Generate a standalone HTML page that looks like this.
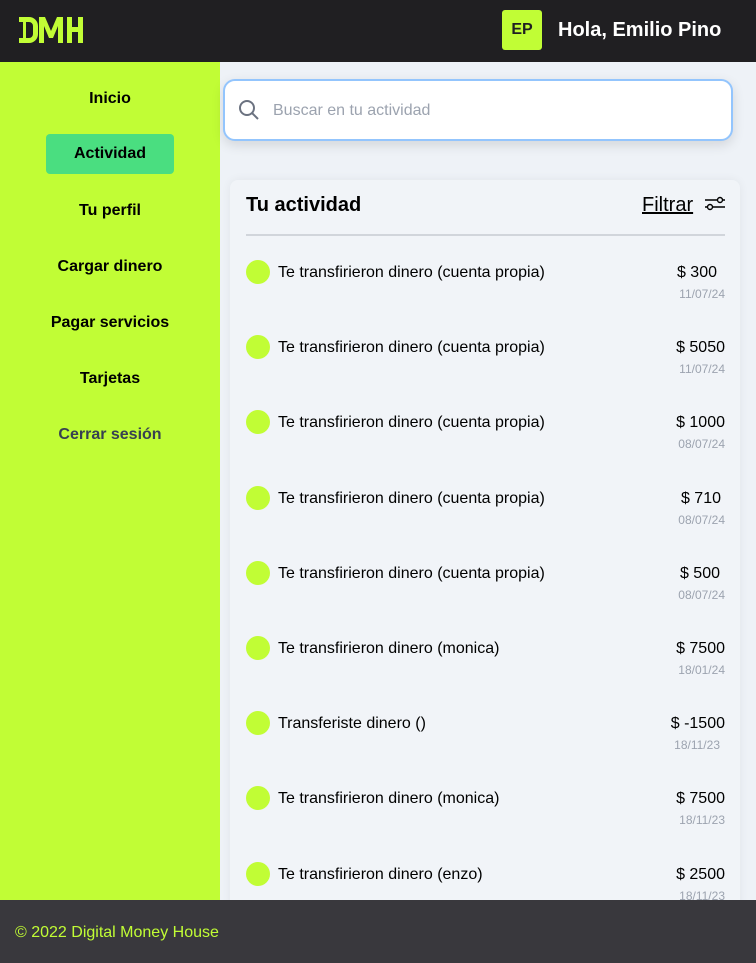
<!DOCTYPE html><html><head><style>
body{margin:0;width:756px;height:963px;overflow:hidden;background:#eef2f7;font-family:"Liberation Sans",sans-serif;position:relative}
.hd{position:absolute;left:0;top:0;width:756px;height:62px;background:#201f22}
.av{position:absolute;left:502px;top:10px;width:40px;height:40px;background:#c1fd35;border-radius:3px;font-weight:bold;font-size:16px;line-height:40px;text-align:center;color:#201f22}
.hola{position:absolute;left:558px;top:19px;color:#fff;font-weight:bold;font-size:20px}
.sb{position:absolute;left:0;top:62px;width:220px;height:838px;background:#c1fd35}
.sb div{position:absolute;left:0;width:220px;text-align:center;font-weight:bold;font-size:16px;color:#000}
.act{left:46px!important;width:128px!important;height:40px;line-height:40px;background:#4ade80;border-radius:4px}
.srch{position:absolute;left:223px;top:79px;width:506px;height:58px;background:#fff;border:2px solid #93c5fd;border-radius:12px;box-shadow:0 4px 12px rgba(0,0,0,.12)}
.srch span{position:absolute;left:48px;top:21px;color:#9ca3af;font-size:16px}
.card{position:absolute;left:230px;top:180px;width:510px;height:740px;background:#f1f4f8;border-radius:8px;box-shadow:0 0 10px rgba(0,0,0,.06)}
.ttl{position:absolute;left:16px;top:14px;font-size:20px;font-weight:bold}
.fil{position:absolute;left:412px;top:14px;font-size:20px;text-decoration:underline}
.ln{position:absolute;left:16px;top:54px;width:479px;height:2px;background:#d1d5db}
.row{position:absolute;left:16px;width:479px;height:50px}
.dot{position:absolute;left:0;top:0;width:24px;height:24px;border-radius:50%;background:#c1fd35}
.tx{position:absolute;left:32px;top:4px;font-size:16px}
.am{position:absolute;right:8px;top:4px;font-size:16px}
.dt{position:absolute;right:0;top:27px;font-size:12px;color:#9ca3af}
.ft{position:absolute;left:0;top:900px;width:756px;height:63px;background:#39383d;color:#c1fd35;font-size:16px}
.ft span{position:absolute;left:15px;top:24px}
</style></head><body>
<div class="hd">
<svg style="position:absolute;left:19px;top:17px" width="64" height="26" viewBox="0 0 64 26" fill="#c1fd35"><path d="M0 0h10a9 9 0 0 1 9 9v8a9 9 0 0 1-9 9H0v-5h4V5H0z M7 5v16h3a4 4 0 0 0 4-4V9a4 4 0 0 0-4-4z"/><path d="M20 26V0h6l6 14 6-14h6v26h-5V9l-5 12h-4L25 9v17z"/><path d="M48 0h5v10h6V0h5v26h-5V15h-6v11h-5z"/></svg>
<div class="av">EP</div><div class="hola">Hola, Emilio Pino</div></div>
<div class="sb">
<div style="top:28px">Inicio</div>
<div class="act" style="top:72px">Actividad</div>
<div style="top:140px">Tu perfil</div>
<div style="top:196px">Cargar dinero</div>
<div style="top:252px">Pagar servicios</div>
<div style="top:308px">Tarjetas</div>
<div style="top:364px;color:#374151">Cerrar sesión</div>
</div>
<div class="srch"><svg style="position:absolute;left:13px;top:18px" width="22" height="22" viewBox="0 0 22 22" fill="none" stroke="#6b7280" stroke-width="2"><circle cx="9" cy="9" r="7"/><path d="M14 14l6 6"/></svg><span>Buscar en tu actividad</span></div>
<div class="card">
<div class="ttl">Tu actividad</div><div class="fil">Filtrar</div>
<svg style="position:absolute;left:474px;top:14px" width="22" height="18" viewBox="0 0 22 18" fill="none" stroke="#000" stroke-width="1.4"><path d="M1 6h13M18 6h3M1 13h3M8 13h13"/><circle cx="16" cy="6" r="2.5"/><circle cx="6" cy="13" r="2.5"/></svg>
<div class="ln"></div>
<div class="row" style="top:80px"><div class="dot"></div><div class="tx">Te transfirieron dinero (cuenta propia)</div><div class="am">$ 300</div><div class="dt">11/07/24</div></div>
<div class="row" style="top:155px"><div class="dot"></div><div class="tx">Te transfirieron dinero (cuenta propia)</div><div class="am" style="right:0">$ 5050</div><div class="dt">11/07/24</div></div>
<div class="row" style="top:230px"><div class="dot"></div><div class="tx">Te transfirieron dinero (cuenta propia)</div><div class="am" style="right:0">$ 1000</div><div class="dt">08/07/24</div></div>
<div class="row" style="top:306px"><div class="dot"></div><div class="tx">Te transfirieron dinero (cuenta propia)</div><div class="am" style="right:4px">$ 710</div><div class="dt">08/07/24</div></div>
<div class="row" style="top:381px"><div class="dot"></div><div class="tx">Te transfirieron dinero (cuenta propia)</div><div class="am" style="right:5px">$ 500</div><div class="dt">08/07/24</div></div>
<div class="row" style="top:456px"><div class="dot"></div><div class="tx">Te transfirieron dinero (monica)</div><div class="am" style="right:0">$ 7500</div><div class="dt">18/01/24</div></div>
<div class="row" style="top:531px"><div class="dot"></div><div class="tx">Transferiste dinero ()</div><div class="am" style="right:0">$ -1500</div><div class="dt" style="right:5px">18/11/23</div></div>
<div class="row" style="top:606px"><div class="dot"></div><div class="tx">Te transfirieron dinero (monica)</div><div class="am" style="right:0">$ 7500</div><div class="dt">18/11/23</div></div>
<div class="row" style="top:682px"><div class="dot"></div><div class="tx">Te transfirieron dinero (enzo)</div><div class="am" style="right:0">$ 2500</div><div class="dt">18/11/23</div></div>
</div>
<div class="ft"><span>© 2022 Digital Money House</span></div>
</body></html>
